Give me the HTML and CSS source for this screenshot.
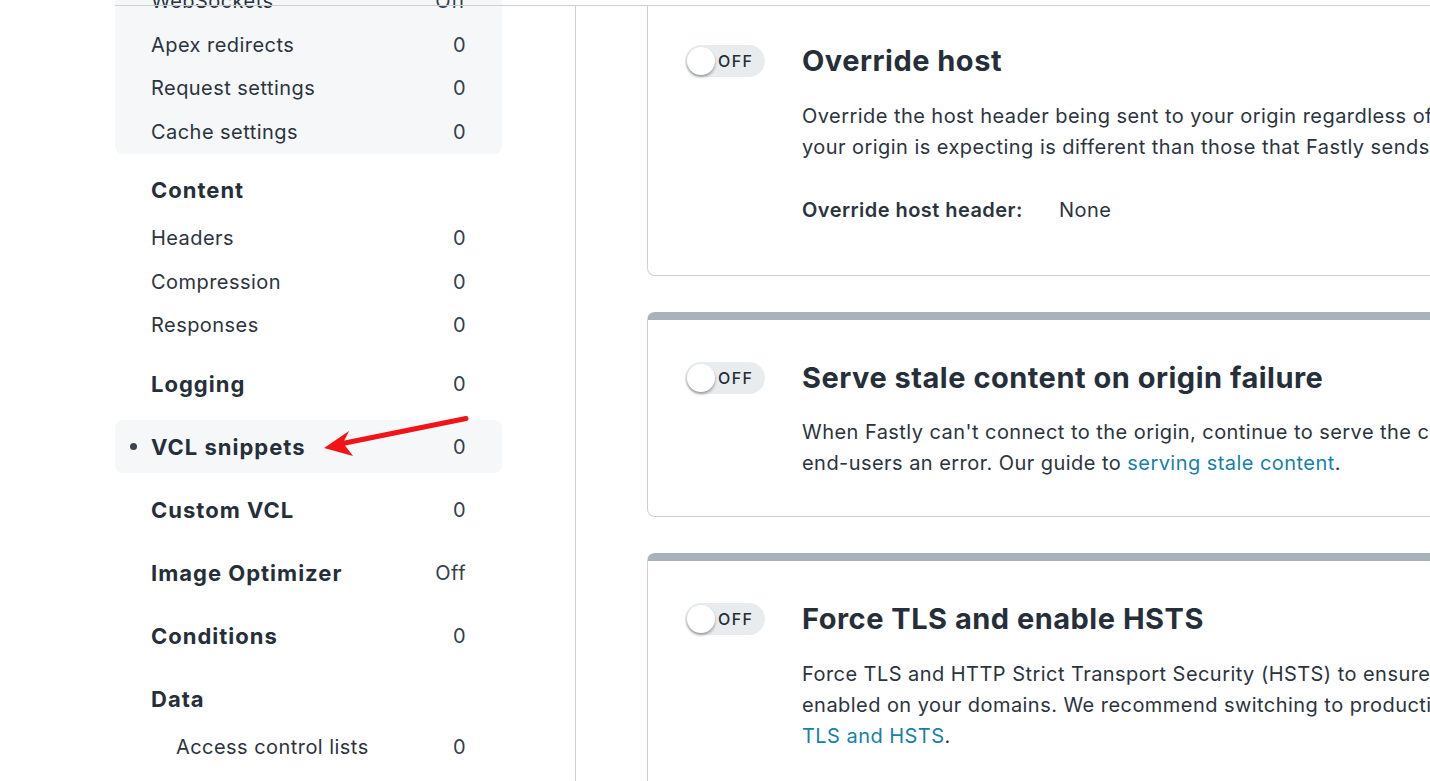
FILE: index.html
```html
<!DOCTYPE html>
<html lang="en">
<head>
<meta charset="utf-8">
<title>Service configuration</title>
<link rel="stylesheet" href="styles.css">
</head>
<body>
<div class="page">
  <aside class="sidebar">
    <div class="group-box">
      <div class="row"><span>WebSockets</span><span class="count">Off</span></div>
      <div class="row"><span>Apex redirects</span><span class="count">0</span></div>
      <div class="row"><span>Request settings</span><span class="count">0</span></div>
      <div class="row"><span>Cache settings</span><span class="count">0</span></div>
    </div>
    <div class="head-row"><span>Content</span></div>
    <div class="row"><span>Headers</span><span class="count">0</span></div>
    <div class="row"><span>Compression</span><span class="count">0</span></div>
    <div class="row"><span>Responses</span><span class="count">0</span></div>
    <div class="head-row"><span>Logging</span><span class="count">0</span></div>
    <div class="head-row active"><span class="bullet"></span><span>VCL snippets</span><span class="count">0</span></div>
    <div class="head-row"><span>Custom VCL</span><span class="count">0</span></div>
    <div class="head-row"><span>Image Optimizer</span><span class="count">Off</span></div>
    <div class="head-row"><span>Conditions</span><span class="count">0</span></div>
    <div class="head-row"><span>Data</span></div>
    <div class="row sub"><span>Access control lists</span><span class="count">0</span></div>
  </aside>

  <main class="main">
    <section class="card first">
      <div class="toggle"><span class="knob"></span><span class="toggle-label">OFF</span></div>
      <div class="card-body">
        <h2 class="card-title">Override host</h2>
        <p class="desc">Override the host header being sent to your origin regardless of the host used in the request. Useful when the host header<br>your origin is expecting is different than those that Fastly sends by default.</p>
        <p class="meta"><span class="meta-key">Override host header:</span><span class="meta-val">None</span></p>
      </div>
    </section>

    <section class="card">
      <div class="toggle"><span class="knob"></span><span class="toggle-label">OFF</span></div>
      <div class="card-body">
        <h2 class="card-title">Serve stale content on origin failure</h2>
        <p class="desc">When Fastly can't connect to the origin, continue to serve the cached version of the content instead of sending<br>end-users an error. Our guide to <a href="#">serving stale content</a>.</p>
      </div>
    </section>

    <section class="card">
      <div class="toggle"><span class="knob"></span><span class="toggle-label">OFF</span></div>
      <div class="card-body">
        <h2 class="card-title">Force TLS and enable HSTS</h2>
        <p class="desc">Force TLS and HTTP Strict Transport Security (HSTS) to ensure that every request is secure. Make sure TLS is<br>enabled on your domains. We recommend switching to production settings only after you verify<br><a href="#">TLS and HSTS</a>.</p>
      </div>
    </section>
  </main>

  <div class="top-line"></div>

  <svg class="annot-arrow" width="1430" height="781" viewBox="0 0 1430 781" aria-hidden="true">
    <line x1="466" y1="418.5" x2="340" y2="444" stroke="#f01418" stroke-width="5" stroke-linecap="round"/>
    <polygon points="324,448 349,431 343,443 353,456" fill="#f01418"/>
  </svg>
</div>
</body>
</html>
```
FILE: styles.css
```css
* { box-sizing: border-box; }

html, body {
  margin: 0;
  padding: 0;
  background: #ffffff;
}

body {
  font-family: Inter, "Noto Sans", "Liberation Sans", sans-serif;
  color: #2b343e;
  overflow: hidden;
}

.page {
  position: relative;
  width: 1430px;
  height: 781px;
  overflow: hidden;
  display: flex;
  align-items: flex-start;
}

/* ---------- sidebar ---------- */
.sidebar {
  width: 387px;
  margin-left: 115px;
  margin-top: -20.5px;
  flex-shrink: 0;
}

.group-box {
  background: #f6f7f9;
  border-radius: 0 0 8px 8px;
}

.row {
  height: 43.5px;
  display: flex;
  align-items: center;
  justify-content: space-between;
  padding: 0 36px;
  font-size: 20px;
  font-weight: 400;
  letter-spacing: 0.45px;
  color: #2b343e;
}

.row.sub {
  padding-left: 61px;
}

.count {
  font-size: 20px;
  font-weight: 400;
  letter-spacing: 0.45px;
  color: #34404c;
  margin-left: auto;
}

.head-row {
  height: 53px;
  margin-top: 10px;
  display: flex;
  align-items: center;
  padding: 0 36px;
  font-size: 22px;
  font-weight: 700;
  letter-spacing: 1px;
  color: #262f39;
  border-radius: 8px;
  position: relative;
}

.head-row.active {
  background: #f6f7f9;
}

.bullet {
  position: absolute;
  left: 15px;
  top: 50%;
  width: 7px;
  height: 7px;
  margin-top: -3.5px;
  border-radius: 50%;
  background: #3a4450;
}

/* ---------- main ---------- */
.main {
  margin-left: 73px;
  margin-top: 5px;
  height: 776px;
  flex: 1;
  border-left: 1px solid #c9d1d8;
  padding-left: 71px;
  overflow: hidden;
}

.card {
  width: 1000px;
  border: 1px solid #c9d1d8;
  border-top: 8px solid #a8b2ba;
  border-radius: 8px;
  padding: 42px 0 37px 37px;
  display: flex;
  align-items: flex-start;
  gap: 37px;
  margin-top: 36px;
}

.card.first {
  margin-top: -10px;
}

.toggle {
  width: 80px;
  height: 32px;
  flex-shrink: 0;
  border-radius: 16px;
  background: #e8ecef;
  position: relative;
  display: flex;
  align-items: center;
}

.knob {
  position: absolute;
  left: 2px;
  top: 2px;
  width: 28px;
  height: 28px;
  border-radius: 50%;
  background: #ffffff;
  box-shadow: 0 2px 3px rgba(0, 0, 0, 0.35);
}

.toggle-label {
  margin-left: 33px;
  font-size: 16px;
  font-weight: 500;
  color: #252d36;
  letter-spacing: 1.4px;
}

.card-body {
  flex: 1;
  white-space: nowrap;
}

.card-title {
  margin: 0;
  font-size: 29px;
  line-height: 32px;
  font-weight: 700;
  letter-spacing: 0.5px;
  color: #262f39;
}

.desc {
  margin: 23.5px 0 0;
  font-size: 20px;
  line-height: 31px;
  letter-spacing: 0.45px;
  color: #2b343e;
}

.desc a {
  color: #167fab;
  text-decoration: none;
}

.meta {
  margin: 32px 0 12px;
  font-size: 20px;
  line-height: 31px;
  letter-spacing: 0.45px;
  display: flex;
}

.meta-key {
  font-weight: 600;
  width: 257px;
}

.meta-val {
  font-weight: 400;
}

/* ---------- overlays ---------- */
.top-line {
  position: absolute;
  top: 5px;
  left: 115px;
  right: 0;
  height: 1px;
  background: #c9d1d8;
}

.annot-arrow {
  position: absolute;
  left: 0;
  top: 0;
  pointer-events: none;
}
```
